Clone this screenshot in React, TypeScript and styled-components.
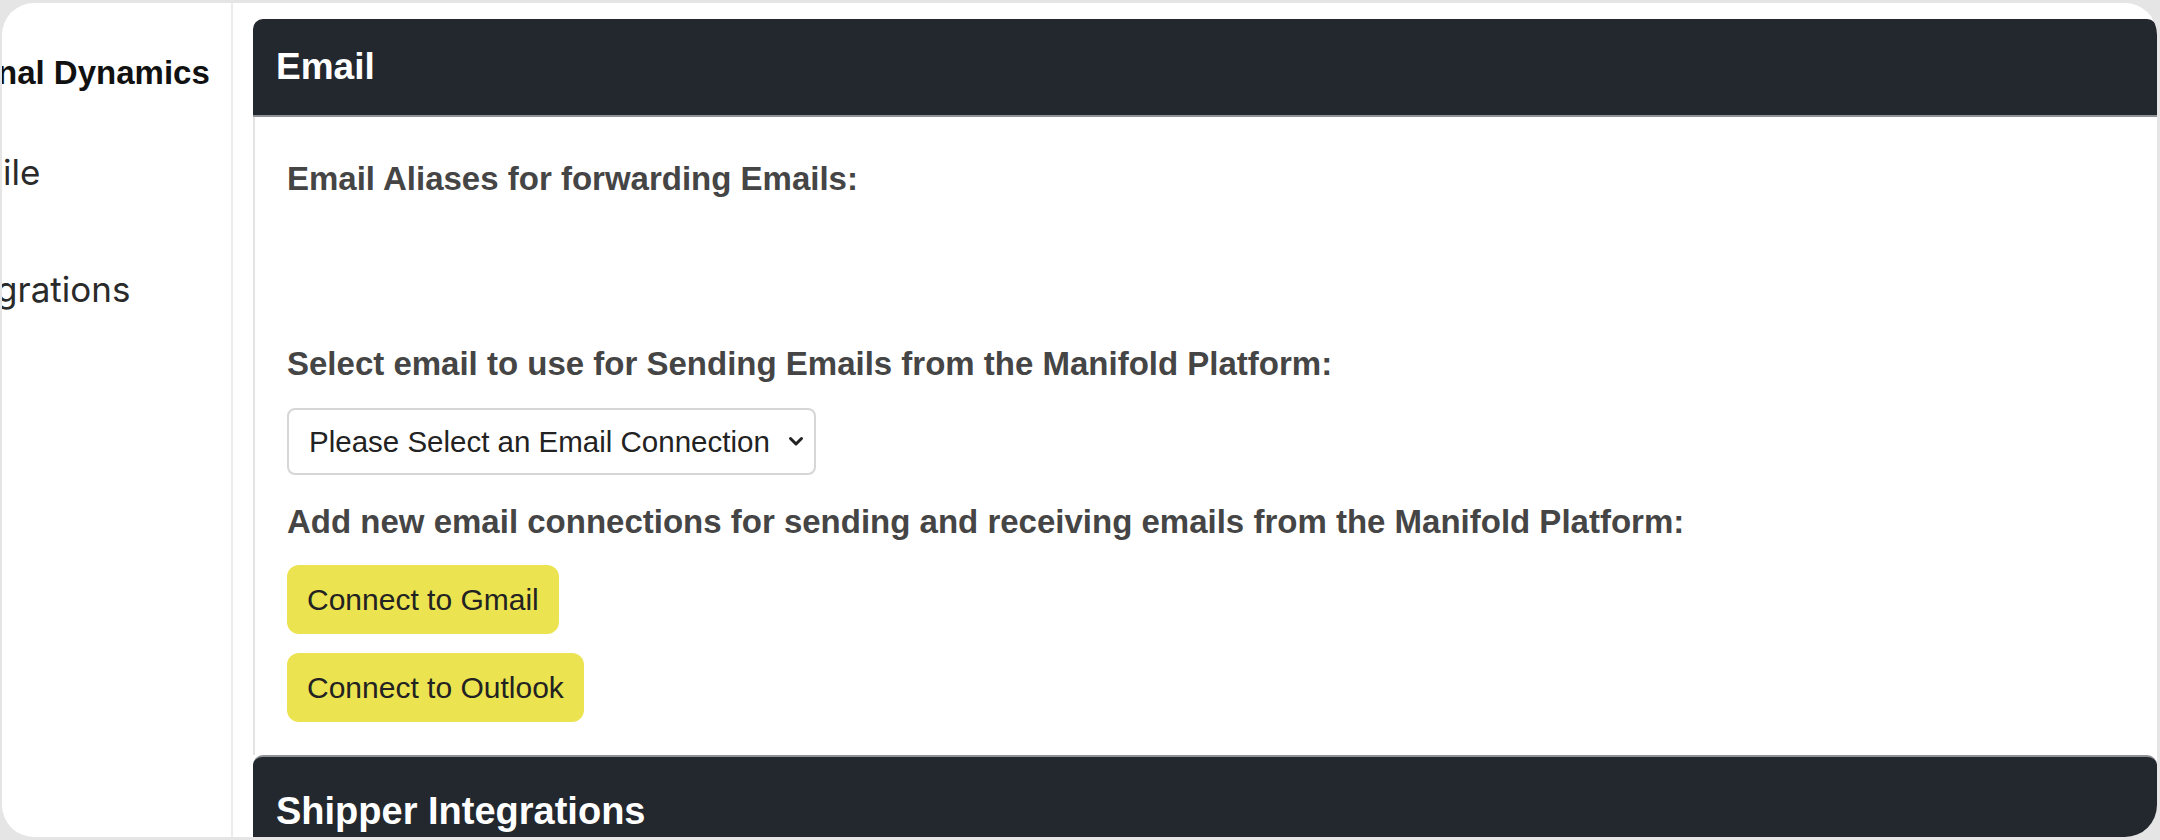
import React from "react";
import styled, { createGlobalStyle } from "styled-components";

const GlobalStyle = createGlobalStyle`
  html, body {
    margin: 0;
    padding: 0;
    background: #e5e5e5;
  }
  * {
    box-sizing: border-box;
  }
`;

const Frame = styled.div`
  width: 2160px;
  height: 840px;
  padding: 3px 3px 3px 2px;
  background: #e5e5e5;
`;

const Card = styled.div`
  display: flex;
  height: 100%;
  background: #ffffff;
  border-radius: 32px;
  overflow: hidden;
`;

const Sidebar = styled.nav`
  width: 231px;
  flex-shrink: 0;
  border-right: 2px solid #ececec;
  overflow: hidden;
  padding-top: 50px;
  display: flex;
  flex-direction: column;
`;

const NavItem = styled.div<{ $bold?: boolean; $offset: number; $gap: number }>`
  margin-left: ${(p) => p.$offset}px;
  margin-top: ${(p) => p.$gap}px;
  height: 40px;
  line-height: 40px;
  white-space: nowrap;
  font-family: ${(p) =>
    p.$bold ? '"Liberation Sans", Arial, sans-serif' : 'Inter, "Liberation Sans", sans-serif'};
  font-weight: ${(p) => (p.$bold ? 700 : 400)};
  font-size: ${(p) => (p.$bold ? 33 : 35)}px;
  color: ${(p) => (p.$bold ? "#111111" : "#2a2a2a")};
`;

const Main = styled.main`
  flex: 1;
  min-width: 0;
  padding: 16px 0 0 20px;
  display: flex;
  flex-direction: column;
`;

const PanelHeader = styled.div<{ $height: number; $topLine?: boolean }>`
  height: ${(p) => p.$height}px;
  flex-shrink: 0;
  display: flex;
  align-items: center;
  padding: 0 23px;
  background: #23272e;
  border-radius: 10px 10px 0 0;
  border-top: ${(p) => (p.$topLine ? "2px solid #8e9196" : "none")};
  border-bottom: ${(p) => (p.$topLine ? "none" : "2px solid #8e9196")};
`;

const PanelTitle = styled.h2<{ $size?: number }>`
  margin: 0;
  font-family: "Liberation Sans", Arial, sans-serif;
  font-weight: 700;
  font-size: ${(p) => p.$size ?? 37}px;
  color: #ffffff;
`;

const PanelBody = styled.div`
  border-left: 2px solid #e3e3e3;
  background: #ffffff;
  padding: 42px 0 33px 32px;
  display: flex;
  flex-direction: column;
  align-items: flex-start;
`;

const Label = styled.div<{ $gap?: number }>`
  margin-top: ${(p) => p.$gap ?? 0}px;
  height: 40px;
  line-height: 40px;
  font-family: "Liberation Sans", Arial, sans-serif;
  font-weight: 700;
  font-size: 33px;
  color: #454545;
  white-space: nowrap;
`;

const AliasList = styled.div`
  height: 145px;
`;

const SelectWrap = styled.div`
  position: relative;
  margin-top: 24px;
  width: 529px;
  height: 67px;
`;

const Select = styled.select`
  appearance: none;
  -webkit-appearance: none;
  width: 100%;
  height: 100%;
  border: 2px solid #d6d6d6;
  border-radius: 8px;
  background: #ffffff;
  padding: 0 40px 0 20px;
  font-family: "Liberation Sans", Arial, sans-serif;
  font-size: 29.5px;
  color: #222222;
  outline: none;
`;

const Chevron = styled.svg`
  position: absolute;
  right: 12px;
  top: 50%;
  width: 16px;
  height: 11px;
  margin-top: -6px;
  pointer-events: none;
`;

const ConnectButton = styled.button<{ $gap: number }>`
  margin-top: ${(p) => p.$gap}px;
  height: 69px;
  padding: 0 20px;
  border: none;
  border-radius: 12px;
  background: #ebe34f;
  font-family: "Liberation Sans", Arial, sans-serif;
  font-size: 30px;
  color: #222222;
  cursor: pointer;
`;

export default function App() {
  return (
    <>
      <GlobalStyle />
      <Frame>
        <Card>
          <Sidebar>
            <NavItem $bold $offset={-5} $gap={0}>
              nal Dynamics
            </NavItem>
            <NavItem $offset={1} $gap={59}>
              ile
            </NavItem>
            <NavItem $offset={-6} $gap={77}>
              grations
            </NavItem>
          </Sidebar>
          <Main>
            <PanelHeader $height={98}>
              <PanelTitle>Email</PanelTitle>
            </PanelHeader>
            <PanelBody>
              <Label>Email Aliases for forwarding Emails:</Label>
              <AliasList />
              <Label>Select email to use for Sending Emails from the Manifold Platform:</Label>
              <SelectWrap>
                <Select defaultValue="">
                  <option value="">Please Select an Email Connection</option>
                </Select>
                <Chevron viewBox="0 0 16 11">
                  <path
                    d="M2.5 2.5 L8 8 L13.5 2.5"
                    fill="none"
                    stroke="#222"
                    strokeWidth="3"
                    strokeLinecap="round"
                    strokeLinejoin="round"
                  />
                </Chevron>
              </SelectWrap>
              <Label $gap={27}>
                Add new email connections for sending and receiving emails from the Manifold Platform:
              </Label>
              <ConnectButton $gap={23}>Connect to Gmail</ConnectButton>
              <ConnectButton $gap={19}>Connect to Outlook</ConnectButton>
            </PanelBody>
            <PanelHeader $height={110} $topLine>
              <PanelTitle $size={38}>Shipper Integrations</PanelTitle>
            </PanelHeader>
          </Main>
        </Card>
      </Frame>
    </>
  );
}
